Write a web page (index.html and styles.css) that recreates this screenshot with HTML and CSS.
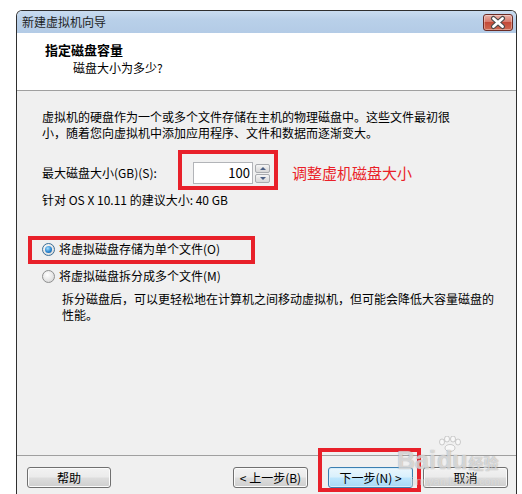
FILE: index.html
```html
<!DOCTYPE html>
<html lang="zh-CN">
<head>
<meta charset="utf-8">
<title>新建虚拟机向导</title>
<link rel="stylesheet" href="styles.css">
</head>
<body>
<div class="window">
  <div class="titlebar">
    <span class="title">新建虚拟机向导</span>
    <span class="close">
      <svg width="28" height="15" viewBox="0 0 28 15">
        <path d="M9.5 3.5 L18.5 11.5 M18.5 3.5 L9.5 11.5" stroke="#4a4a4a" stroke-width="5" stroke-linecap="round" fill="none"/>
        <path d="M9.5 3.5 L18.5 11.5 M18.5 3.5 L9.5 11.5" stroke="#ffffff" stroke-width="2.8" stroke-linecap="round" fill="none"/>
      </svg>
    </span>
  </div>
  <div class="header">
    <div class="h-title">指定磁盘容量</div>
    <div class="h-sub">磁盘大小为多少?</div>
  </div>
  <div class="content">
    <p class="intro">虚拟机的硬盘作为一个或多个文件存储在主机的物理磁盘中。这些文件最初很<br>小，随着您向虚拟机中添加应用程序、文件和数据而逐渐变大。</p>
    <div class="size-row">
      <span class="size-label">最大磁盘大小(GB)(S):</span>
      <div class="spin mark mark-spin">
        <div class="spin-input">100</div>
        <div class="spin-btns">
          <span class="spin-btn up"></span>
          <span class="spin-btn down"></span>
        </div>
      </div>
      <span class="note">调整虚机磁盘大小</span>
    </div>
    <div class="hint">针对 OS X 10.11 的建议大小: 40 GB</div>
    <div class="radio-row first mark mark-radio"><span class="radio checked"></span><span>将虚拟磁盘存储为单个文件(O)</span></div>
    <div class="radio-row second"><span class="radio"></span><span>将虚拟磁盘拆分成多个文件(M)</span></div>
    <p class="desc">拆分磁盘后，可以更轻松地在计算机之间移动虚拟机，但可能会降低大容量磁盘的<br>性能。</p>
  </div>
  <div class="footer">
    <button class="btn help">帮助</button>
    <button class="btn back">&lt; 上一步(B)</button>
    <span class="next-wrap mark mark-next"><button class="btn next">下一步(N) &gt;</button></span>
    <button class="btn cancel">取消</button>
  </div>
  <div class="watermark">
    <svg class="wm-paw" width="26" height="16" viewBox="0 0 26 16">
      <g fill="rgba(255,255,255,0.55)" stroke="rgba(150,150,150,0.45)" stroke-width="1">
        <ellipse cx="5" cy="6" rx="2.5" ry="3"/>
        <ellipse cx="10" cy="3" rx="2.5" ry="3"/>
        <ellipse cx="16" cy="3" rx="2.5" ry="3"/>
        <ellipse cx="21" cy="6" rx="2.5" ry="3"/>
        <ellipse cx="13" cy="12" rx="5" ry="3.5"/>
      </g>
    </svg>
    <div class="wm-logo">Bai<span class="wm-du">du</span><span class="wm-cn">经验</span></div>
    <div class="wm-url">jingyan.baidu.com</div>
  </div>
</div>
</body>
</html>
```

FILE: styles.css
```css
html, body {
  margin: 0;
  padding: 0;
}
body {
  width: 522px;
  height: 494px;
  overflow: hidden;
  background: #ffffff;
  font-family: "Noto Sans CJK SC", "Noto Sans", sans-serif;
  font-size: 12px;
  color: #000;
}

.window {
  position: relative;
  margin: 10px 0 0 16px;
  width: 501px;
  height: 484px;
  box-sizing: border-box;
  border: 1px solid #2f2f2f;
  border-bottom: none;
  border-radius: 6px 6px 0 0;
  background: #f0f0f0;
  display: flex;
  flex-direction: column;
}

.titlebar {
  height: 22px;
  flex: none;
  display: flex;
  align-items: center;
  justify-content: space-between;
  padding: 0 3px 0 5px;
  background: linear-gradient(#c9dcf0, #b9d0e9 40%, #b3cbe6);
  border-radius: 5px 5px 0 0;
}
.title {
  line-height: 22px;
  color: #1e1e1e;
}
.close {
  width: 30px;
  height: 17px;
  box-sizing: border-box;
  border: 1px solid #6b2b25;
  border-radius: 3px;
  background: linear-gradient(#e8b1a8, #d77a6c 45%, #c44a38 50%, #cf6a52);
  display: flex;
  align-items: center;
  justify-content: center;
  box-shadow: inset 0 0 0 1px rgba(255, 255, 255, 0.35);
}
.close svg {
  display: block;
}

.header {
  height: 58px;
  flex: none;
  box-sizing: border-box;
  background: #ffffff;
  border-bottom: 1px solid #a0a0a0;
  padding: 8px 0 0 28px;
}
.h-title {
  font-size: 13px;
  font-weight: bold;
  line-height: 17px;
}
.h-sub {
  margin-top: 2px;
  padding-left: 28px;
  line-height: 16px;
}

.content {
  height: 364px;
  flex: none;
  box-sizing: border-box;
  padding: 18px 0 0 25px;
}
.intro {
  margin: 0;
  line-height: 15.5px;
  white-space: nowrap;
}

.size-row {
  display: flex;
  align-items: center;
  height: 22px;
  margin-top: 22px;
}
.size-label {
  width: 151px;
  flex: none;
  line-height: 22px;
}
.spin {
  display: flex;
  align-items: flex-start;
  flex: none;
}
.spin-input {
  width: 60px;
  height: 22px;
  box-sizing: border-box;
  border: 1px solid #b2b4b8;
  background: #fff;
  text-align: right;
  padding-right: 2px;
  font-size: 13px;
  line-height: 20px;
}
.spin-btns {
  margin: 2px 0 0 2px;
  display: flex;
  flex-direction: column;
  gap: 1px;
}
.spin-btn {
  position: relative;
  width: 15px;
  height: 9px;
  box-sizing: border-box;
  border: 1px solid #a9abaf;
  border-radius: 2px;
  background: linear-gradient(#f6f6f6, #e4e4e4 50%, #d8d8d8);
  display: flex;
  align-items: center;
  justify-content: center;
}
.spin-btn::after {
  content: "";
  width: 0;
  height: 0;
  border-left: 3px solid transparent;
  border-right: 3px solid transparent;
}
.spin-btn.up::after {
  border-bottom: 3px solid #4b5f84;
}
.spin-btn.down::after {
  border-top: 3px solid #4b5f84;
}
.note {
  margin-left: 22px;
  color: #ea1f29;
  font-size: 15px;
  line-height: 22px;
}

.hint {
  margin-top: 8px;
  line-height: 15px;
}

.radio-row {
  display: flex;
  align-items: center;
  gap: 4px;
  height: 16px;
  line-height: 16px;
}
.radio-row.first {
  margin-top: 34px;
}
.radio-row.second {
  margin-top: 11px;
}
.radio {
  position: relative;
  width: 13px;
  height: 13px;
  flex: none;
  box-sizing: border-box;
  border-radius: 50%;
  border: 1px solid #8e8f8f;
  background: radial-gradient(circle at 40% 35%, #ffffff, #e6e6e6 55%, #cfcfcf);
}
.radio.checked {
  border-color: #3b6e96;
}
.radio.checked::after {
  content: "";
  position: absolute;
  left: 2px;
  top: 2px;
  width: 7px;
  height: 7px;
  border-radius: 50%;
  background: radial-gradient(circle at 40% 35%, #a8e0ff, #2a86d1 55%, #0d4b8a);
}

.desc {
  margin: 7px 0 0 20px;
  line-height: 15.5px;
  white-space: nowrap;
}

.footer {
  flex: none;
  border-top: 1px solid #a0a0a0;
  padding: 11px 8px 0 10px;
  display: flex;
  align-items: flex-start;
}
.btn {
  height: 21px;
  box-sizing: border-box;
  margin: 0;
  padding: 0;
  border: 1px solid #707070;
  border-radius: 3px;
  background: linear-gradient(#f2f2f2, #ebebeb 48%, #dddddd 52%, #cfcfcf);
  box-shadow: inset 0 0 0 1px #fbfbfb;
  font-family: "Noto Sans CJK SC", "Noto Sans", sans-serif;
  font-size: 12px;
  line-height: 19px;
  color: #000;
  text-align: center;
  flex: none;
}
.help {
  width: 84px;
}
.back {
  width: 75px;
  margin-left: auto;
}
.next-wrap {
  display: block;
  margin-left: 20px;
  flex: none;
}
.next {
  display: block;
  width: 85px;
  border-color: #3c7fb1;
  background: linear-gradient(#eaf6fd, #d9f0fc 48%, #bee6fd 52%, #a7d9f5);
  box-shadow: inset 0 0 0 1px #d6eefb;
}
.cancel {
  width: 85px;
  margin-left: 10px;
}

.mark {
  position: relative;
}
.mark::after {
  content: "";
  position: absolute;
  border: 4px solid #e8202a;
  pointer-events: none;
}
.mark-spin::after {
  top: -12px;
  left: -15px;
  right: -8px;
  bottom: -6px;
}
.mark-radio::after {
  top: -5px;
  bottom: -7px;
  left: -14px;
  width: 227px;
  box-sizing: border-box;
}
.mark-next::after {
  top: -19px;
  left: -10px;
  right: -8px;
  bottom: -4px;
}

.watermark {
  position: absolute;
  left: 380px;
  top: 425px;
  pointer-events: none;
  color: rgba(255, 255, 255, 0.55);
  text-shadow: 0 0 1px rgba(140, 140, 140, 0.5), 0 0 1px rgba(140, 140, 140, 0.5);
}
.wm-paw {
  display: block;
  margin-left: 40px;
  margin-bottom: -4px;
}
.wm-logo {
  font-family: "Liberation Sans", sans-serif;
  font-weight: bold;
  font-size: 25px;
  line-height: 24px;
  white-space: nowrap;
}
.wm-du {
  margin-left: 1px;
}
.wm-cn {
  font-family: "Noto Sans CJK SC", sans-serif;
  font-size: 15px;
  margin-left: 1px;
}
.wm-url {
  font-family: "Liberation Sans", sans-serif;
  font-size: 11px;
  line-height: 12px;
  margin-left: 14px;
  color: rgba(255, 255, 255, 0.4);
  text-shadow: 0 0 1px rgba(140, 140, 140, 0.35);
}
```
